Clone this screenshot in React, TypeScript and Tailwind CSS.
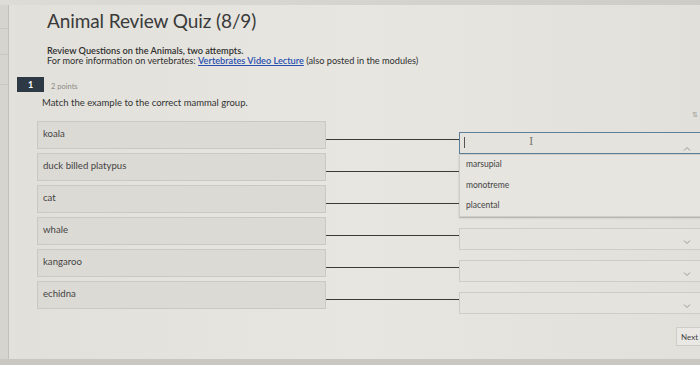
import React from "react";

const rows = ["koala", "duck billed platypus", "cat", "whale", "kangaroo", "echidna"];

function ChevronDown() {
  return (
    <svg width="8" height="6" viewBox="0 0 8 6" className="text-[#9a9994]">
      <path d="M1 1.5 L4 4.5 L7 1.5" fill="none" stroke="currentColor" strokeWidth="1" />
    </svg>
  );
}
function ChevronUp() {
  return (
    <svg width="8" height="6" viewBox="0 0 8 6" className="text-[#9a9994]">
      <path d="M1 4.5 L4 1.5 L7 4.5" fill="none" stroke="currentColor" strokeWidth="1" />
    </svg>
  );
}

export default function App() {
  return (
    <div
      className="w-[700px] h-[365px] overflow-hidden flex flex-col bg-[#e3e1db] text-[#3b3b3b]"
      style={{ fontFamily: "Lato, 'Open Sans', sans-serif" }}
    >
      <div className="h-[5px] bg-gradient-to-r from-[#dedcd6] to-[#cdccc7] shrink-0" />
      <div className="flex flex-1 min-h-0">
        <div className="w-[9px] bg-[#d6d4ce] border-r border-[#c2c0ba] shrink-0 flex flex-col">
          <div className="h-[24px] border-b border-[#c9c7c1]" />
          <div className="h-[26px] border-b border-[#c9c7c1]" />
          <div className="h-[30px] border-b border-[#c9c7c1]" />
        </div>
        <div className="w-[8px] shrink-0" />
        <div className="flex-1 min-w-0 flex flex-col bg-gradient-to-r from-[#e2e0da] via-[#e7e6e1] to-[#e1e0da]">
          <div className="pl-[30px] pt-[3px]">
            <h1 className="text-[19px] leading-[26px] text-[#3a3a3a] tracking-[-0.1px]">Animal Review Quiz (8/9)</h1>
            <div className="mt-[12px] text-[9.2px] leading-[10px] text-[#2f2f2f] font-semibold">
              Review Questions on the Animals, two attempts.
            </div>
            <div className="text-[9.2px] leading-[10px] text-[#2f2f2f]">
              For more information on vertebrates:{" "}
              <span className="text-[#2a4fb0] underline font-semibold">Vertebrates Video Lecture</span> (also posted in the modules)
            </div>
          </div>
          <div className="flex items-center mt-[11px] pr-[2px]">
            <div className="w-[27px] h-[15px] bg-[#2d3945] text-white text-[9px] font-bold flex items-center justify-center">1</div>
            <div className="ml-[7px] text-[7.5px] text-[#8c8b87] mt-[4px]">2 points</div>
          </div>
          <div className="pl-[25px] mt-[4px] text-[9.5px] text-[#333]">Match the example to the correct mammal group.</div>
          <div className="flex justify-end pr-[2px] mt-[-2px] h-[10px] text-[7px] text-[#9a9994]">⇅</div>

          <div className="flex flex-col gap-[4px] pl-[20px] mt-[2px]">
            {rows.map((r, i) => (
              <div key={r} className="flex items-center h-[28px]">
                <div className="w-[289px] h-[28px] shrink-0 bg-[#dcdad4] border border-[#cbc9c3] flex items-center pl-[5px] text-[9.6px] text-[#444]">
                  {r}
                </div>
                <div className="w-[133px] h-px bg-[#3a3a3a] shrink-0 mt-[9px]" />
                <div className="relative flex-1 mt-[16px] mr-[-8px]">
                  <div
                    className={
                      "h-[22px] flex items-center justify-between pl-[4px] pr-[16px] bg-[#e4e3de] border " +
                      (i === 0 ? "border-[#5f7d99]" : "border-[#cfcdc7]")
                    }
                  >
                    {i === 0 ? (
                      <>
                        <span className="w-px h-[11px] bg-[#555]" />
                        <span className="text-[11px] text-[#777] ml-[64px]" style={{ fontFamily: "'DejaVu Serif', serif" }}>I</span>
                        <span className="flex-1" />
                        <span className="mt-[12px]"><ChevronUp /></span>
                      </>
                    ) : (
                      <>
                        <span />
                        <span className="mt-[6px]"><ChevronDown /></span>
                      </>
                    )}
                  </div>
                  {i === 0 && (
                    <div className="absolute left-0 right-0 top-[22px] z-10 h-[63px] bg-[#e6e5e0] border border-[#cfcdc7] shadow-[0_1px_2px_rgba(0,0,0,0.15)] flex flex-col justify-center gap-[8px] pl-[6px] text-[8.5px] text-[#444]">
                      <div>marsupial</div>
                      <div>monotreme</div>
                      <div>placental</div>
                    </div>
                  )}
                </div>
              </div>
            ))}
          </div>

          <div className="flex-1" />
          <div className="flex justify-end">
            <div className="w-[24px] h-[19px] bg-[#e9e8e4] border border-[#cfcdc7] border-r-0 flex items-center pl-[4px] text-[8px] text-[#444] overflow-hidden whitespace-nowrap">
              Next
            </div>
          </div>
          <div className="h-[13px]" />
        </div>
      </div>
      <div className="h-[6px] bg-[#c9c7c1] shrink-0" />
    </div>
  );
}
